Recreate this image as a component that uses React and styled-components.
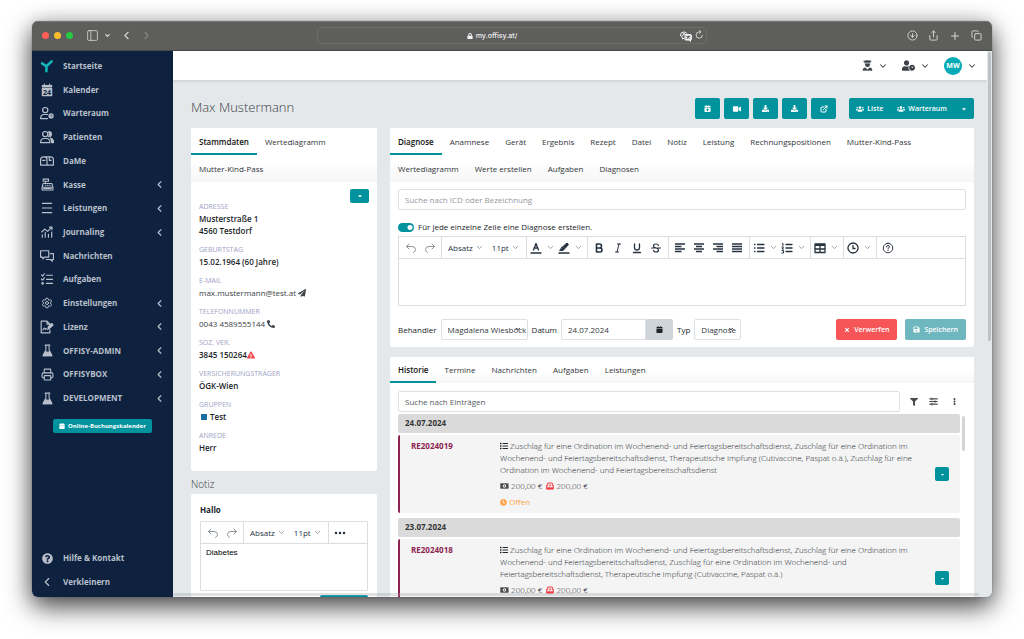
import React from "react";
import styled, { createGlobalStyle, css } from "styled-components";
import {
  FaCalendarPlus,
  FaCalendar,
  FaCaretDown,
  FaClock,
  FaDownload,
  FaEllipsisV,
  FaExclamationTriangle,
  FaFilter,
  FaList,
  FaLock,
  FaPaperPlane,
  FaPhoneAlt,
  FaQuestionCircle,
  FaSave,
  FaTimes,
  FaUserClock,
  FaUsers,
  FaVideo,
} from "react-icons/fa";
import {
  ChevronDown,
  ChevronLeft,
  ChevronRight,
  CircleArrowDown,
  Copy,
  ExternalLink,
  PanelLeft,
  Plus,
  Printer,
  Settings,
  Share,
} from "lucide-react";

const GlobalStyle = createGlobalStyle`
  * {
    box-sizing: border-box;
  }

  body {
    margin: 0;
    overflow: hidden;
    background: #fff;
    color: #212529;
    font-family: "Open Sans", sans-serif;
    font-size: 8px;
    line-height: 12px;
  }

  button,
  input,
  select,
  textarea {
    margin: 0;
    padding: 0;
    border: 0;
    background: none;
    color: inherit;
    font: inherit;
  }

  ul {
    margin: 0;
    padding: 0;
    list-style: none;
  }

  a {
    color: inherit;
    text-decoration: none;
  }

  svg {
    flex: none;
  }
`;

/* ---------- window ---------- */

const Desktop = styled.div`
  display: flex;
  height: 100vh;
  padding: 21px 32px 42px;
`;

const Window = styled.div`
  position: relative;
  display: flex;
  flex: 1;
  flex-direction: column;
  min-width: 0;
  overflow: hidden;
  border-radius: 6px;
  box-shadow: 0 0 1px rgba(0, 0, 0, 0.6), 0 10px 26px rgba(0, 0, 0, 0.7),
    0 0 20px rgba(0, 0, 0, 0.15);
`;

const TitleBar = styled.header`
  display: grid;
  flex: none;
  grid-template-columns: 1fr 390px 1fr;
  align-items: center;
  height: 30px;
  padding: 0 10px;
  border-bottom: 1px solid #4b4a49;
  background: #5e5e5c;
  box-shadow: inset 0 1px 0 #777;
  color: #d6d6d5;
`;

const BarSide = styled.div`
  display: flex;
  align-items: center;
  justify-content: ${(p) => (p.$end ? "flex-end" : "flex-start")};
  gap: ${(p) => (p.$end ? "10px" : "5px")};

  svg {
    display: block;
  }
`;

const Light = styled.span`
  width: 7px;
  height: 7px;
  border-radius: 50%;
  background: ${(p) => p.$color};
`;

const BarButton = styled.button`
  margin-left: ${(p) => p.$space || 0}px;
  opacity: ${(p) => (p.disabled ? 0.35 : 1)};
`;

const AddressBar = styled.div`
  display: grid;
  grid-template-columns: 1fr auto 1fr;
  align-items: center;
  height: 17px;
  padding: 0 2px;
  border: 1px solid #6c6c6a;
  border-radius: 4px;
  color: #f1f1f1;
  font-family: Inter, sans-serif;
  font-size: 7px;
  font-weight: 500;
`;

const Address = styled.a`
  display: flex;
  grid-column: 2;
  align-items: center;
  gap: 3px;
  margin-right: 40px;
`;

const AddressTools = styled.div`
  display: flex;
  justify-content: flex-end;
  gap: 3px;
`;

const Body = styled.div`
  display: flex;
  flex: 1;
  min-height: 0;
`;

/* ---------- sidebar ---------- */

const Sidebar = styled.nav`
  display: flex;
  flex: none;
  flex-direction: column;
  align-items: stretch;
  width: 141px;
  padding: 3px 0;
  background: #0e2240;
  color: #b9c0cb;
  font-weight: 700;
`;

const NavList = styled.ul`
  display: flex;
  flex-direction: column;
  max-height: ${(p) => (p.$bottom ? "48px" : "356px")};
  margin-top: ${(p) => (p.$bottom ? "auto" : 0)};

  li {
    flex: 0 1 24px;
    min-height: 0;
  }
`;

const NavLink = styled.a`
  display: grid;
  grid-template-columns: 14px 1fr auto;
  align-items: center;
  gap: 9px;
  height: 100%;
  min-height: 23px;
  padding: 0 8px;

  svg {
    justify-self: center;
  }
`;

const BookingButton = styled.button`
  display: flex;
  align-items: center;
  align-self: center;
  gap: 3px;
  height: 14px;
  margin-top: 9px;
  padding: 0 6px;
  border-radius: 2px;
  background: #00939d;
  color: #fff;
  font-size: 6px;
  font-weight: 700;
`;

const Icon = styled.svg.attrs((p) => ({
  viewBox: p.viewBox || "0 0 24 24",
  width: p.width || 14,
  height: p.height || p.width || 14,
  "aria-hidden": true,
}))`
  fill: none;
  stroke: currentColor;
  stroke-width: 2;
  stroke-linecap: round;
  stroke-linejoin: round;
`;

const HomeIcon = () => (
  <Icon>
    <path
      d="M3.500 7.500l7.500 5L20 4M11 13.500v7.500"
      style={{ stroke: "#14b5bb", strokeWidth: 4.4 }}
    />
  </Icon>
);

const CalendarIcon = () => (
  <Icon>
    <path d="M7.500 2v4M16.500 2v4" />
    <path d="M4 4.500h16v2H4z" fill="currentColor" />
    <path d="M4 9.500h16v12H4z" fill="currentColor" />
    <text
      x="12"
      y="20"
      textAnchor="middle"
      fontSize="12"
      fill="#0e2240"
      stroke="none"
    >
      24
    </text>
  </Icon>
);

const WaitingIcon = () => (
  <Icon>
    <circle cx="9" cy="7" r="4.500" />
    <path d="M13 14.500H6q-5 1-5 7h12" />
    <circle cx="19" cy="17" r="4.500" fill="currentColor" stroke="none" />
    <path d="M19 14.500v3h2" stroke="#0e2240" strokeWidth="1" />
  </Icon>
);

const PatientsIcon = () => (
  <Icon>
    <circle cx="9" cy="7" r="4.500" />
    <path d="M1 21.500q0-7 6-7h4q6 0 6 7z" />
    <path
      d="M15 2.500a4.500 4.500 0 0 1 0 9q2-4.500 0-9zM18 14q5 1 5.500 7.500H20q0-5-2-7.500z"
      fill="currentColor"
    />
  </Icon>
);

const MailboxIcon = () => (
  <Icon>
    <path d="M6 5h12q5 0 5 5v9H1v-9q0-5 5-5zM12 19v-9q0-5-5-5M4.500 11h4M16 5v6h3" />
  </Icon>
);

const RegisterIcon = () => (
  <Icon width={13}>
    <path d="M4 2h10v4H4zM8 6v4M4 10h16l2 7v5H2v-5zM2 17h20M8 13.500h1M12 13.500h1M16 13.500h1" />
    <path d="M5 19.500h14" />
  </Icon>
);

const MenuIcon = () => (
  <Icon>
    <path d="M4 4h16M4 12h16M4 20h16" />
  </Icon>
);

const JournalIcon = () => (
  <Icon>
    <path d="M3 12l5-5 5 4 7-7M16 3.500h4.500V8M4 17v4M9 13v8M14.500 16v5M20 12v9" />
  </Icon>
);

const ChatIcon = () => (
  <Icon>
    <path d="M1 3h14v11H8l-3 3v-3H1zM18 8h5v10h-2v3l-3-3h-7" />
  </Icon>
);

const TasksIcon = () => (
  <Icon>
    <path d="M2.500 5l2 2 3-4M2.500 12l2 2 3-4M11 5.500h10.500M11 12.500h10.500M11 19.500h10.500" />
    <circle cx="4.500" cy="19.500" r="1.200" />
  </Icon>
);

const LicenseIcon = () => (
  <Icon>
    <path d="M17 17v5H2V2h10l5 5M12 2v5h4M5 17q3-6 4-1 2-2 4 0l2-1 7-7-2-2-6 6" />
    <path d="M14 13l6-6 2 2-7 6z" fill="currentColor" />
  </Icon>
);

const FlaskIcon = () => (
  <Icon width={13}>
    <path d="M7.500 2h9M9 2.500V11l-5 10.500h16L15 11V2.500" />
    <path d="M7 15h10l3 6.500H4z" fill="currentColor" />
  </Icon>
);

const DoctorIcon = () => (
  <Icon width={11}>
    <path
      d="M4 2l8-1 8 1-2 3.500H6zM7 8h10v2q0 5-5 5t-5-5z"
      fill="currentColor"
      style={{ strokeWidth: 1 }}
    />
    <path
      d="M2 23q0-6 5-6l5 4 5-4q5 0 5 6z"
      fill="currentColor"
      style={{ strokeWidth: 1 }}
    />
  </Icon>
);

const TranslateIcon = () => (
  <Icon width={12}>
    <path d="M9 16l-4 2v-3q-4-2-4-5 0-6 7-6 5 0 6 3M5 12l3-6 2 4" />
    <path d="M11 9h9q3 0 3 3v5q0 3-2 3v3l-3-3h-7z" fill="currentColor" />
    <path
      d="M14 13h6M17 12v1q0 4-3 4M15 14q2 3 4 3"
      style={{ stroke: "#5e5e5c" }}
    />
  </Icon>
);

const ReloadIcon = () => (
  <Icon width={9}>
    <path d="M20 14a8.500 8.500 0 1 1-8.500-9H15M12 1l4 4-4 4" />
  </Icon>
);

const NAV = [
  { label: "Startseite", icon: <HomeIcon /> },
  { label: "Kalender", icon: <CalendarIcon /> },
  { label: "Warteraum", icon: <WaitingIcon /> },
  { label: "Patienten", icon: <PatientsIcon /> },
  { label: "DaMe", icon: <MailboxIcon /> },
  { label: "Kasse", icon: <RegisterIcon />, sub: true },
  { label: "Leistungen", icon: <MenuIcon />, sub: true },
  { label: "Journaling", icon: <JournalIcon />, sub: true },
  { label: "Nachrichten", icon: <ChatIcon /> },
  { label: "Aufgaben", icon: <TasksIcon /> },
  { label: "Einstellungen", icon: <Settings size={12} />, sub: true },
  { label: "Lizenz", icon: <LicenseIcon />, sub: true },
  { label: "OFFISY-ADMIN", icon: <FlaskIcon />, sub: true },
  { label: "OFFISYBOX", icon: <Printer size={13} />, sub: true },
  { label: "DEVELOPMENT", icon: <FlaskIcon />, sub: true },
];

/* ---------- page ---------- */

const Page = styled.div`
  display: flex;
  flex: 1;
  flex-direction: column;
  min-width: 0;
  background: #e4e8eb;
`;

const TopBar = styled.div`
  display: flex;
  flex: none;
  align-items: center;
  justify-content: flex-end;
  gap: 14px;
  height: 29px;
  padding-right: 10px;
  background: #fff;
  box-shadow: 0 1px 3px rgba(0, 0, 0, 0.12);
  color: #3c4248;
`;

const TopMenu = styled.button`
  display: flex;
  align-items: center;
  gap: 5px;
`;

const Avatar = styled.span`
  display: grid;
  place-items: center;
  width: 18px;
  height: 18px;
  border-radius: 50%;
  background: #02abb6;
  color: #fff;
  font-size: 7px;
  font-weight: 700;
`;

const Main = styled.main`
  flex: 1;
  min-height: 0;
  overflow: hidden;
  padding: 17px 13px 0 18px;
`;

const PageHead = styled.div`
  display: flex;
  align-items: center;
  justify-content: space-between;
  height: 23px;
`;

const PatientName = styled.h1`
  margin: 0 0 3px;
  color: #3a4045;
  font-size: 13px;
  font-weight: 300;
  line-height: 20px;
`;

const Actions = styled.div`
  display: flex;
  gap: 4px;
`;

const Button = styled.button`
  display: flex;
  align-items: center;
  justify-content: center;
  gap: 4px;
  min-width: ${(p) => (p.$wide ? "48px" : "25px")};
  height: 21px;
  padding: 0 8px;
  border-radius: 2px;
  background: ${(p) => p.$color || "#00939d"};
  color: #fff;
  font-size: 7px;
  font-weight: 600;
`;

const SmallButton = styled(Button)`
  min-width: ${(p) => (p.$square ? "14px" : "19px")};
  height: 14px;
  padding: 0;
`;

const ButtonGroup = styled.div`
  display: flex;
  margin-left: 9px;

  ${Button} {
    gap: 3px;
    min-width: 0;
    padding: 0 7px;
    border-radius: 0;
  }

  ${Button}:first-child {
    border-radius: 2px 0 0 2px;
  }

  ${Button}:last-child {
    border-radius: 0 2px 2px 0;
  }
`;

const Columns = styled.div`
  display: grid;
  grid-template-columns: 186px minmax(0, 1fr);
  gap: 13px;
  align-items: start;
  margin-top: 8px;
`;

const Column = styled.div`
  display: flex;
  flex-direction: column;
  gap: ${(p) => p.$gap || 0}px;
`;

const Card = styled.section`
  border-radius: 2px;
  background: #fff;
`;

const Tabs = styled.div`
  display: flex;
  flex-wrap: wrap;
  background: linear-gradient(#fff 60%, #f6f6f6);
`;

const Tab = styled.button`
  height: ${(p) => (p.$low ? "26px" : "27px")};
  padding: 2px 8px 0;
  border-bottom: 2px solid ${(p) => (p.$active ? "#00939d" : "transparent")};
  color: ${(p) => (p.$active ? "#111" : "#32363a")};
  font-weight: ${(p) => (p.$active ? 600 : 500)};
`;

const Pane = styled.div`
  padding: ${(p) => p.$pad || "7px 8px"};
`;

const PaneActions = styled.div`
  display: flex;
  justify-content: flex-end;
  margin-bottom: -2px;
`;

const Facts = styled.dl`
  margin: 0;

  dt {
    color: #a0a2c5;
    font-size: 7px;
    font-weight: 500;
  }

  dd {
    margin: 0 0 7px;
    font-weight: 600;
    white-space: pre-line;
  }

  dd svg {
    vertical-align: -1px;
  }
`;

const Contact = styled.a`
  color: #3c4247;
  font-weight: 500;
`;

const Swatch = styled.span`
  display: inline-block;
  width: 6px;
  height: 6px;
  margin: 0 3px 0 2px;
  background: #1d6ea0;
`;

const NoteHeading = styled.h2`
  margin: 5px 0 2px;
  color: #3a4045;
  font-size: 10px;
  font-weight: 300;
  line-height: 16px;
`;

const NoteTitle = styled.h3`
  margin: 0 0 5px;
  font-size: 8px;
  font-weight: 700;
  line-height: 12px;
`;

const fieldBox = css`
  height: 21px;
  border: 1px solid #dcdfe3;
  border-radius: 2px;
  background: #fff;
`;

const TextField = styled.input`
  ${fieldBox}
  flex: ${(p) => (p.$fill ? 1 : "none")};
  width: ${(p) => (p.$fill ? "100%" : "85px")};
  min-width: 0;
  padding: 0 6px;
  color: #343a40;

  &::placeholder {
    color: ${(p) => (p.$strong ? "#555b61" : "#94989c")};
    opacity: 1;
  }
`;

const SwitchLabel = styled.label`
  display: flex;
  align-items: center;
  gap: 4px;
  margin: 11px 0 3px;
  font-weight: 500;
`;

const Switch = styled.input`
  appearance: none;
  width: 16px;
  height: 9px;
  border-radius: 5px;
  background: radial-gradient(circle at 12px 50%, #fff 2px, #00939d 3px);
`;

/* ---------- rich text editor ---------- */

const EditorBox = styled.div`
  border: 1px solid #dcdddf;
`;

const Toolbar = styled.div`
  display: flex;
  height: 22px;
  border-bottom: 1px solid #dcdddf;
  color: #26323f;
`;

const ToolGroup = styled.div`
  display: flex;
  padding: 0 2px;
  border-right: 1px solid #dcdddf;

  &:last-child {
    border-right: 0;
  }
`;

const Tool = styled.button`
  display: flex;
  align-items: center;
  justify-content: center;
  gap: ${(p) => (p.$split ? "4px" : "2px")};
  width: ${(p) => (p.$text ? "auto" : p.$split ? "28px" : "19px")};
  padding: 0 ${(p) => (p.$text ? "4px" : 0)};
  color: ${(p) => (p.disabled ? "#8b939b" : "inherit")};
  font-weight: 500;

  .caret {
    color: #7b848d;
  }
`;

const EditorText = styled.textarea`
  display: block;
  width: 100%;
  height: 46px;
  padding: 3px 5px;
  resize: none;
  outline: 0;
  color: #000;
  font-family: "Liberation Sans", Arial, sans-serif;
`;

const Caret = () => <ChevronDown className="caret" size={9} />;

const Lines = ({ rows }) => (
  <Icon width={12}>
    {rows.map(([x, w], i) => (
      <path
        key={i}
        d={`M${x} ${4 + i * 5}h${w}`}
        strokeLinecap="butt"
        style={{ strokeWidth: 2.6 }}
      />
    ))}
  </Icon>
);

const UndoTools = () => (
  <ToolGroup>
    <Tool type="button" aria-label="Rückgängig" disabled>
      <Icon width={12}>
        <path d="M8 4L3 9l5 5M3 9h11q7 0 7 6 0 4-4 6" />
      </Icon>
    </Tool>
    <Tool type="button" aria-label="Wiederholen" disabled>
      <Icon width={12}>
        <path d="M16 4l5 5-5 5M21 9H10q-7 0-7 6 0 4 4 6" />
      </Icon>
    </Tool>
  </ToolGroup>
);

const FormatTools = () => (
  <ToolGroup>
    <Tool type="button" $text>
      Absatz <Caret />
    </Tool>
    <Tool type="button" $text>
      11pt <Caret />
    </Tool>
  </ToolGroup>
);

const FullTools = () => (
  <>
    <ToolGroup>
      <Tool type="button" aria-label="Textfarbe" $split>
        <Icon width={12}>
          <path d="M2 22h20" style={{ strokeWidth: 3 }} />
          <path d="M7 16l5-13 5 13M9 12h6" style={{ strokeWidth: 2.6 }} />
        </Icon>
        <Caret />
      </Tool>
      <Tool type="button" aria-label="Hintergrundfarbe" $split>
        <Icon width={12}>
          <path d="M2 22h20" style={{ strokeWidth: 3 }} />
          <path d="M10 9l8-7 3 3-7 8zM9 10l4 4-3 3H4z" fill="currentColor" />
        </Icon>
        <Caret />
      </Tool>
    </ToolGroup>
    <ToolGroup>
      <Tool type="button" aria-label="Fett">
        <Icon width={12}>
          <path
            d="M7 4h6a4 4 0 0 1 0 8H7zM7 12h7a4 4 0 0 1 0 8H7z"
            style={{ strokeWidth: 3.2 }}
          />
        </Icon>
      </Tool>
      <Tool type="button" aria-label="Kursiv">
        <Icon width={12}>
          <path d="M11 4h6M7 20h6M14 4l-4 16" />
        </Icon>
      </Tool>
      <Tool type="button" aria-label="Unterstrichen">
        <Icon width={12}>
          <path
            d="M7 4v7q0 5 5 5t5-5V4M5 21h14"
            style={{ strokeWidth: 2.6 }}
          />
        </Icon>
      </Tool>
      <Tool type="button" aria-label="Durchgestrichen">
        <Icon width={12}>
          <path
            d="M17 7q-1-3-5-3-5 0-5 4 0 3 5 4 5 1 5 4 0 4-5 4-4 0-5-3M3 12h18"
            style={{ strokeWidth: 2.4 }}
          />
        </Icon>
      </Tool>
    </ToolGroup>
    <ToolGroup>
      <Tool type="button" aria-label="Linksbündig">
        <Lines rows={[[2, 20], [2, 13], [2, 20], [2, 13]]} />
      </Tool>
      <Tool type="button" aria-label="Zentriert">
        <Lines rows={[[2, 20], [6, 12], [2, 20], [6, 12]]} />
      </Tool>
      <Tool type="button" aria-label="Rechtsbündig">
        <Lines rows={[[2, 20], [9, 13], [2, 20], [9, 13]]} />
      </Tool>
      <Tool type="button" aria-label="Blocksatz">
        <Lines rows={[[2, 20], [2, 20], [2, 20], [2, 20]]} />
      </Tool>
    </ToolGroup>
    <ToolGroup>
      <Tool type="button" aria-label="Aufzählung" $split>
        <Icon width={12}>
          <path
            d="M9 5h13M9 12h13M9 19h13M3 5h1M3 12h1M3 19h1"
            style={{ strokeWidth: 2.6 }}
          />
        </Icon>
        <Caret />
      </Tool>
      <Tool type="button" aria-label="Nummerierte Liste" $split>
        <Icon width={12}>
          <path d="M10 5h12M10 12h12M10 19h12" style={{ strokeWidth: 2.6 }} />
          <path d="M3 3h1v4M2 10h3l-3 4h3M2 17h3v5H2" />
        </Icon>
        <Caret />
      </Tool>
    </ToolGroup>
    <ToolGroup>
      <Tool type="button" aria-label="Tabelle" $split>
        <Icon width={12}>
          <path
            d="M2 4h20v17H2zM2 6.500h20M2 14h20M12 6v15"
            style={{ strokeWidth: 2.6 }}
          />
        </Icon>
        <Caret />
      </Tool>
    </ToolGroup>
    <ToolGroup>
      <Tool type="button" aria-label="Datum und Uhrzeit" $split>
        <Icon width={12}>
          <path
            d="M12 2a10 10 0 1 0 .1 0zM12 7v6h4"
            style={{ strokeWidth: 2.6 }}
          />
        </Icon>
        <Caret />
      </Tool>
    </ToolGroup>
    <ToolGroup>
      <Tool type="button" aria-label="Hilfe">
        <Icon width={12}>
          <path d="M12 2.500a9.500 9.500 0 1 0 .1 0zM9 10q0-3 3-3t3 2.500q0 1.500-3 3.500v1M12 17v.2" />
        </Icon>
      </Tool>
    </ToolGroup>
  </>
);

const Editor = ({ full, label, text = "" }) => (
  <EditorBox>
    <Toolbar>
      <UndoTools />
      <FormatTools />
      {full ? (
        <FullTools />
      ) : (
        <ToolGroup>
          <Tool type="button" aria-label="Mehr">
            <Icon width={12}>
              <path
                d="M4 12h.1M12 12h.1M20 12h.1"
                style={{ strokeWidth: 5 }}
              />
            </Icon>
          </Tool>
        </ToolGroup>
      )}
    </Toolbar>
    <EditorText aria-label={label} defaultValue={text} />
  </EditorBox>
);

/* ---------- diagnosis form ---------- */

const FormRow = styled.div`
  display: flex;
  align-items: center;
  gap: 4px;
  margin-top: ${(p) => (p.$tight ? "4px" : "13px")};
  font-weight: 500;
`;

const SelectWrap = styled.span`
  position: relative;
  display: flex;
  width: ${(p) => p.$width}px;

  svg {
    position: absolute;
    top: 7px;
    right: 7px;
    pointer-events: none;
  }
`;

const Select = styled.select`
  ${fieldBox}
  appearance: none;
  width: 100%;
  padding: 0 0 0 6px;
  color: #343a40;
  font-weight: 400;
`;

const DateField = styled.span`
  display: flex;

  input {
    border-radius: 2px 0 0 2px;
    font-weight: 400;
  }
`;

const DateButton = styled.button`
  display: grid;
  place-items: center;
  width: 27px;
  border-radius: 0 2px 2px 0;
  background: #cfd5db;
`;

const FormButtons = styled.div`
  display: flex;
  gap: 8px;
  margin-left: auto;
`;

/* ---------- history ---------- */

const SearchRow = styled.div`
  display: flex;
  align-items: center;
  gap: 9px;
  padding-right: 7px;
  color: #4d4d4d;

  button {
    display: grid;
    place-items: center;
    width: 10px;
  }

  button:last-child {
    margin-left: 2px;
  }
`;

const HistoryScroll = styled.div`
  position: relative;
  margin-top: 2px;
  padding-right: 6px;
`;

const ScrollThumb = styled.span`
  position: absolute;
  top: 2px;
  right: 1px;
  width: 3px;
  height: 35px;
  border-radius: 2px;
  background: #d5d5d5;
`;

const DayHeading = styled.h3`
  margin: 0 0 2px;
  padding: 3px 7px 4px;
  border-radius: 2px;
  background: #dadada;
  color: #333;
  font-size: 8px;
  font-weight: 700;
  line-height: 12px;
`;

const Entry = styled.article`
  display: grid;
  grid-template-columns: 89px minmax(0, 1fr) 14px;
  align-items: center;
  min-height: 78px;
  margin-bottom: 5px;
  padding: 5px 11px;
  border-left: 2px solid #8e2352;
  border-radius: 2px;
  background: #f4f4f4;
`;

const EntryNumber = styled.a`
  align-self: start;
  color: #8e2352;
  font-weight: 700;
`;

const EntryBody = styled.div`
  align-self: start;
  padding-right: 12px;
  color: #23282d;
  font-weight: 300;

  p {
    margin: 0 0 4px;
  }

  p:last-child {
    margin-bottom: 0;
  }

  svg {
    vertical-align: -1px;
  }
`;

const Open = styled.span`
  color: #fba64a;
  font-weight: 400;
`;

const CashIcon = () => (
  <Icon width={9} height={8} style={{ color: "#484d52" }}>
    <path d="M1 5h22v14H1z" fill="currentColor" />
    <circle cx="12" cy="12" r="5" fill="#f4f4f4" stroke="none" />
    <path d="M12 10v4" />
  </Icon>
);

const DueIcon = () => (
  <Icon width={8} style={{ color: "#f3434a" }}>
    <path d="M5 11V3h14v8M2 10v11h20V10" style={{ strokeWidth: 3 }} />
    <path d="M3 17h18v4H3z" fill="currentColor" />
    <path d="M12 7v6" style={{ strokeWidth: 3 }} />
  </Icon>
);

const SlidersIcon = () => (
  <Icon width={9}>
    <path
      d="M2 5h20M2 12h20M2 19h20M8 3v4M16 10v4M8 17v4"
      style={{ strokeWidth: 3 }}
    />
  </Icon>
);

const BottomScroll = styled.div`
  position: absolute;
  right: 13px;
  bottom: 1px;
  left: 141px;
  height: 3px;
  border-radius: 2px;
  background: rgba(150, 156, 160, 0.3);
`;

const PageScroll = styled.div`
  flex: none;
  width: 5px;
  padding: 1px 1px 0;
  background: #e4e8eb;

  &::before {
    content: "";
    display: block;
    width: 3px;
    height: 53%;
    border-radius: 2px;
    background: #bcc2c6;
  }
`;

const DIAGNOSIS_TABS = [
  "Diagnose",
  "Anamnese",
  "Gerät",
  "Ergebnis",
  "Rezept",
  "Datei",
  "Notiz",
  "Leistung",
  "Rechnungspositionen",
  "Mutter-Kind-Pass",
  "Wertediagramm",
  "Werte erstellen",
  "Aufgaben",
  "Diagnosen",
];

const HISTORY_TABS = [
  "Historie",
  "Termine",
  "Nachrichten",
  "Aufgaben",
  "Leistungen",
];

const HISTORY = [
  {
    date: "24.07.2024",
    number: "RE2024019",
    open: true,
    text: "Zuschlag für eine Ordination im Wochenend- und Feiertagsbereitschaftsdienst, Zuschlag für eine Ordination im Wochenend- und Feiertagsbereitschaftsdienst, Therapeutische Impfung (Cutivaccine, Paspat o.ä.), Zuschlag für eine Ordination im Wochenend- und Feiertagsbereitschaftsdienst",
  },
  {
    date: "23.07.2024",
    number: "RE2024018",
    text: "Zuschlag für eine Ordination im Wochenend- und Feiertagsbereitschaftsdienst, Zuschlag für eine Ordination im Wochenend- und Feiertagsbereitschaftsdienst, Zuschlag für eine Ordination im Wochenend- und Feiertagsbereitschaftsdienst, Therapeutische Impfung (Cutivaccine, Paspat o.ä.)",
  },
];

const TabBar = ({ items, low }) => (
  <Tabs role="tablist">
    {items.map((item, i) => (
      <Tab
        key={item}
        type="button"
        role="tab"
        aria-selected={i === 0}
        $active={i === 0}
        $low={low}
      >
        {item}
      </Tab>
    ))}
  </Tabs>
);

const Browser = () => (
  <TitleBar>
    <BarSide>
      <Light $color="#fe5f57" />
      <Light $color="#febb2e" />
      <Light $color="#28c840" />
      <BarButton aria-label="Seitenleiste" $space={8}>
        <PanelLeft size={13} strokeWidth={1.5} />
      </BarButton>
      <BarButton aria-label="Tabgruppen">
        <ChevronDown size={7} strokeWidth={4} />
      </BarButton>
      <BarButton aria-label="Zurück" $space={4}>
        <ChevronLeft size={13} />
      </BarButton>
      <BarButton aria-label="Vor" $space={2} disabled>
        <ChevronRight size={13} />
      </BarButton>
    </BarSide>
    <AddressBar>
      <Address href="#">
        <FaLock size={6} />
        my.offisy.at/
      </Address>
      <AddressTools>
        <TranslateIcon />
        <ReloadIcon />
      </AddressTools>
    </AddressBar>
    <BarSide $end>
      <BarButton aria-label="Downloads">
        <CircleArrowDown size={11} strokeWidth={2} />
      </BarButton>
      <BarButton aria-label="Teilen">
        <Share size={11} strokeWidth={2} />
      </BarButton>
      <BarButton aria-label="Neuer Tab">
        <Plus size={12} />
      </BarButton>
      <BarButton aria-label="Tabübersicht">
        <Copy size={11} strokeWidth={2} />
      </BarButton>
    </BarSide>
  </TitleBar>
);

const SideNav = () => (
  <Sidebar>
    <NavList>
      {NAV.map((item) => (
        <li key={item.label}>
          <NavLink href="#">
            {item.icon}
            {item.label}
            {item.sub && <ChevronLeft size={11} strokeWidth={2.5} />}
          </NavLink>
        </li>
      ))}
    </NavList>
    <BookingButton type="button">
      <FaCalendar size={6} />
      Online-Buchungskalender
    </BookingButton>
    <NavList $bottom>
      <li>
        <NavLink href="#">
          <FaQuestionCircle size={11} />
          Hilfe &amp; Kontakt
        </NavLink>
      </li>
      <li>
        <NavLink href="#">
          <ChevronLeft size={14} />
          Verkleinern
        </NavLink>
      </li>
    </NavList>
  </Sidebar>
);

const MasterData = () => (
  <Card>
    <TabBar items={["Stammdaten", "Wertediagramm", "Mutter-Kind-Pass"]} />
    <Pane $pad="7px 8px 10px">
      <PaneActions>
        <SmallButton type="button" aria-label="Bearbeiten">
          <FaCaretDown size={6} />
        </SmallButton>
      </PaneActions>
      <Facts>
        <dt>ADRESSE</dt>
        <dd>{"Musterstraße 1\n4560 Testdorf"}</dd>
        <dt>GEBURTSTAG</dt>
        <dd>15.02.1964 (60 Jahre)</dd>
        <dt>E-MAIL</dt>
        <dd>
          <Contact href="#">
            max.mustermann@test.at <FaPaperPlane size={8} />
          </Contact>
        </dd>
        <dt>TELEFONNUMMER</dt>
        <dd>
          <Contact href="#">
            0043 4589555144 <FaPhoneAlt size={8} />
          </Contact>
        </dd>
        <dt>SOZ. VER.</dt>
        <dd>
          3845 150264
          <FaExclamationTriangle size={8} color="#f4474b" />
        </dd>
        <dt>VERSICHERUNGSTRÄGER</dt>
        <dd>ÖGK-Wien</dd>
        <dt>GRUPPEN</dt>
        <dd>
          <Swatch />
          Test
        </dd>
        <dt>ANREDE</dt>
        <dd>Herr</dd>
      </Facts>
    </Pane>
  </Card>
);

const DiagnosisForm = () => (
  <Card>
    <TabBar items={DIAGNOSIS_TABS} />
    <Pane>
      <TextField
        $fill
        aria-label="Diagnose suchen"
        placeholder="Suche nach ICD oder Bezeichnung"
      />
      <SwitchLabel>
        <Switch type="checkbox" defaultChecked />
        Für jede einzelne Zeile eine Diagnose erstellen.
      </SwitchLabel>
      <Editor full label="Diagnosetext" />
      <FormRow>
        <label htmlFor="behandler">Behandler</label>
        <SelectWrap $width={87}>
          <Select id="behandler">
            <option>Magdalena Wiesböck</option>
          </Select>
          <ChevronDown size={6} strokeWidth={4} />
        </SelectWrap>
        <label htmlFor="datum">Datum</label>
        <DateField>
          <TextField id="datum" defaultValue="24.07.2024" />
          <DateButton type="button" aria-label="Kalender öffnen">
            <FaCalendar size={7} />
          </DateButton>
        </DateField>
        <label htmlFor="typ">Typ</label>
        <SelectWrap $width={47}>
          <Select id="typ">
            <option>Diagnose</option>
          </Select>
          <ChevronDown size={6} strokeWidth={4} />
        </SelectWrap>
        <FormButtons>
          <Button type="button" $color="#f65658">
            <FaTimes size={6} />
            Verwerfen
          </Button>
          <Button type="button" $color="#6fb7bf">
            <FaSave size={7} />
            Speichern
          </Button>
        </FormButtons>
      </FormRow>
    </Pane>
  </Card>
);

const History = () => (
  <Card>
    <TabBar items={HISTORY_TABS} low />
    <Pane $pad="8px">
      <SearchRow>
        <TextField
          $fill
          $strong
          aria-label="Suche nach Einträgen"
          placeholder="Suche nach Einträgen"
        />
        <button type="button" aria-label="Filter">
          <FaFilter size={8} />
        </button>
        <button type="button" aria-label="Ansicht">
          <SlidersIcon />
        </button>
        <button type="button" aria-label="Mehr">
          <FaEllipsisV size={7} />
        </button>
      </SearchRow>
      <HistoryScroll>
        {HISTORY.map((day) => (
          <React.Fragment key={day.number}>
            <DayHeading>{day.date}</DayHeading>
            <Entry>
              <EntryNumber href="#">{day.number}</EntryNumber>
              <EntryBody>
                <p>
                  <FaList size={8} /> {day.text}
                </p>
                <p>
                  <CashIcon /> 200,00 €&nbsp; <DueIcon /> 200,00 €
                </p>
                {day.open && (
                  <p>
                    <Open>
                      <FaClock size={7} /> Offen
                    </Open>
                  </p>
                )}
              </EntryBody>
              <SmallButton type="button" aria-label="Aktionen" $square>
                <FaCaretDown size={5} />
              </SmallButton>
            </Entry>
          </React.Fragment>
        ))}
        <ScrollThumb />
      </HistoryScroll>
    </Pane>
  </Card>
);

export default function App() {
  return (
    <>
      <GlobalStyle />
      <Desktop>
        <Window>
          <Browser />
          <Body>
            <SideNav />
            <Page>
              <TopBar>
                <TopMenu aria-label="Behandler">
                  <DoctorIcon />
                  <ChevronDown size={10} strokeWidth={2.5} />
                </TopMenu>
                <TopMenu aria-label="Warteraum">
                  <FaUserClock size={13} />
                  <ChevronDown size={10} strokeWidth={2.5} />
                </TopMenu>
                <TopMenu>
                  <Avatar>MW</Avatar>
                  <ChevronDown size={10} strokeWidth={2.5} />
                </TopMenu>
              </TopBar>
              <Main>
                <PageHead>
                  <PatientName>Max Mustermann</PatientName>
                  <Actions>
                    <Button aria-label="Termin">
                      <FaCalendarPlus size={7} />
                    </Button>
                    <Button aria-label="Video">
                      <FaVideo size={8} />
                    </Button>
                    <Button aria-label="Export">
                      <FaDownload size={7} />
                    </Button>
                    <Button aria-label="Download">
                      <FaDownload size={7} />
                    </Button>
                    <Button aria-label="Extern öffnen">
                      <ExternalLink size={8} strokeWidth={3} />
                    </Button>
                    <ButtonGroup>
                      <Button>
                        <FaUsers size={8} />
                        Liste
                      </Button>
                      <Button>
                        <FaUsers size={8} />
                        Warteraum
                      </Button>
                      <Button aria-label="Weitere">
                        <FaCaretDown size={6} />
                      </Button>
                    </ButtonGroup>
                  </Actions>
                </PageHead>
                <Columns>
                  <Column>
                    <MasterData />
                    <NoteHeading>Notiz</NoteHeading>
                    <Card>
                      <Pane $pad="10px 9px">
                        <NoteTitle>Hallo</NoteTitle>
                        <Editor label="Notiz" text="Diabetes" />
                        <FormRow $tight>
                          <FormButtons>
                            <Button
                              type="button"
                              aria-label="Notiz speichern"
                              $wide
                            >
                              <FaSave size={7} />
                            </Button>
                          </FormButtons>
                        </FormRow>
                      </Pane>
                    </Card>
                  </Column>
                  <Column $gap={10}>
                    <DiagnosisForm />
                    <History />
                  </Column>
                </Columns>
              </Main>
            </Page>
            <PageScroll />
          </Body>
          <BottomScroll />
        </Window>
      </Desktop>
    </>
  );
}
